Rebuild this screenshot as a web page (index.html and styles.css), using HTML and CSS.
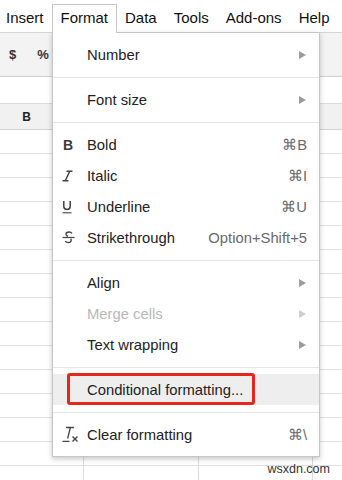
FILE: index.html
```html
<!DOCTYPE html>
<html lang="en">
<head>
  <meta charset="UTF-8" />
  <title>Format menu</title>
  <link rel="stylesheet" href="styles.css">
</head>
<body>
<div class="app">

  <!-- Menu bar -->
  <div class="menubar">
    <span class="menubar-item">Insert</span>
    <span class="menubar-item is-open">Format</span>
    <span class="menubar-item">Data</span>
    <span class="menubar-item">Tools</span>
    <span class="menubar-item">Add-ons</span>
    <span class="menubar-item">Help</span>
  </div>

  <!-- Toolbar + sheet behind the menu -->
  <div class="toolbar">
    <span class="tool">$</span>
    <span class="tool">%</span>
  </div>
  <div class="formula-bar"></div>
  <div class="col-headers">
    <span class="col-head">B</span>
  </div>
  <div class="sheet"></div>

  <!-- Format dropdown -->
  <div class="dropdown">
    <div class="item">
      <span class="item-icon"></span>
      <span class="item-label">Number</span>
      <span class="arrow"></span>
    </div>
    <div class="sep"></div>
    <div class="item">
      <span class="item-icon"></span>
      <span class="item-label">Font size</span>
      <span class="arrow"></span>
    </div>
    <div class="sep"></div>
    <div class="item">
      <span class="item-icon"><span class="icon-bold">B</span></span>
      <span class="item-label">Bold</span>
      <span class="item-key">⌘B</span>
    </div>
    <div class="item">
      <span class="item-icon">
        <svg width="11" height="12" viewBox="0 0 11 12">
          <path d="M4.5 1.2h6M0.5 10.8h6M7.8 1.2L3.2 10.8" stroke="#444" stroke-width="1.5" fill="none"/>
        </svg>
      </span>
      <span class="item-label">Italic</span>
      <span class="item-key">⌘I</span>
    </div>
    <div class="item">
      <span class="item-icon">
        <svg width="10" height="14" viewBox="0 0 10 14">
          <path d="M1.8 1v5.2a3.2 3.2 0 0 0 6.4 0V1" stroke="#444" stroke-width="1.5" fill="none"/>
          <path d="M0.5 12.8h9" stroke="#444" stroke-width="1.1"/>
        </svg>
      </span>
      <span class="item-label">Underline</span>
      <span class="item-key">⌘U</span>
    </div>
    <div class="item">
      <span class="item-icon">
        <svg width="13" height="13" viewBox="0 0 13 13">
          <path d="M10 2.4C9.4 1.5 8.3 1 7 1 5.3 1 4 1.9 4 3.2c0 1.1 0.8 1.7 2 2.1" stroke="#444" stroke-width="1.3" fill="none"/>
          <path d="M0.5 6.5h12" stroke="#444" stroke-width="1.2"/>
          <path d="M8.6 7.8c0.4 0.4 0.6 0.8 0.6 1.4 0 1.4-1.3 2.4-3 2.4-1.3 0-2.4-0.5-3-1.4" stroke="#444" stroke-width="1.3" fill="none"/>
        </svg>
      </span>
      <span class="item-label">Strikethrough</span>
      <span class="item-key">Option+Shift+5</span>
    </div>
    <div class="sep"></div>
    <div class="item">
      <span class="item-icon"></span>
      <span class="item-label">Align</span>
      <span class="arrow"></span>
    </div>
    <div class="item is-disabled">
      <span class="item-icon"></span>
      <span class="item-label">Merge cells</span>
      <span class="arrow"></span>
    </div>
    <div class="item">
      <span class="item-icon"></span>
      <span class="item-label">Text wrapping</span>
      <span class="arrow"></span>
    </div>
    <div class="sep"></div>
    <div class="item is-hover">
      <span class="item-icon"></span>
      <span class="item-label">Conditional formatting...</span>
      <span class="callout"></span>
    </div>
    <div class="sep"></div>
    <div class="item">
      <span class="item-icon">
        <svg width="18" height="17" viewBox="0 0 18 17">
          <path d="M4 1.5h8M8.4 1.5L5.6 12.5M0.5 15.3h7" stroke="#444" stroke-width="1.3" fill="none"/>
          <path d="M10.5 10.5l5 5M15.5 10.5l-5 5" stroke="#444" stroke-width="1.4"/>
        </svg>
      </span>
      <span class="item-label">Clear formatting</span>
      <span class="item-key">⌘\</span>
    </div>
  </div>

  <span class="watermark">wsxdn.com</span>
</div>
</body>
</html>
```

FILE: styles.css
```css
/* Basic page styling */
* {
  box-sizing: border-box;
  margin: 0;
  padding: 0;
}
body {
  font-family: "Liberation Sans", Arial, sans-serif;
  background: #fff;
  color: #222;
}
.app {
  position: relative;
  width: 342px;
  height: 480px;
  overflow: hidden;
  display: flex;
  flex-direction: column;
}

/* ============================================================
   Menu bar
   ============================================================ */
.menubar {
  display: flex;
  align-items: flex-end;
  height: 33px;
  padding-top: 4px;
  border-bottom: 1px solid #d6d6d6;
  white-space: nowrap;
}
.menubar-item {
  height: 28px;
  padding: 0 7.5px;
  border: 1px solid transparent;
  border-bottom: none;
  font-size: 15px;
  line-height: 25px;
  color: #111;
}
.menubar-item:first-child {
  padding-left: 5px;
}
.menubar-item.is-open {
  position: relative;
  z-index: 3;
  height: 29px;
  margin-bottom: -1px;
  background: #fff;
  border-color: #c8c8c8;
}

/* ============================================================
   Toolbar and sheet
   ============================================================ */
.toolbar {
  display: flex;
  align-items: center;
  gap: 21px;
  height: 44px;
  padding-left: 9px;
  background: #f3f3f3;
  border-bottom: 1px solid #cfcfcf;
}
.tool {
  font-size: 13px;
  font-weight: bold;
  color: #333;
}
.formula-bar {
  height: 27px;
  border-bottom: 1px solid #d9d9d9;
}
.col-headers {
  display: flex;
  align-items: center;
  height: 26px;
  background: #f1f1f1;
  border-bottom: 1px solid #d4d4d4;
}
.col-head {
  width: 53px;
  text-align: center;
  font-size: 12px;
  font-weight: bold;
  color: #222;
}
.sheet {
  flex: 1;
  background:
    linear-gradient(to right, transparent 83px, #dadada 83px, #dadada 84px, transparent 84px),
    linear-gradient(to right, transparent 198px, #dadada 198px, #dadada 199px, transparent 199px),
    linear-gradient(to right, transparent 312px, #dadada 312px, #dadada 313px, transparent 313px),
    repeating-linear-gradient(to bottom, transparent 0, transparent 23px, #e0e0e0 23px, #e0e0e0 24px);
}

/* ============================================================
   Dropdown menu
   ============================================================ */
.dropdown {
  position: absolute;
  top: 32px;
  left: 52px;
  width: 268px;
  padding: 6px 0;
  background: #fff;
  border: 1px solid #c6c6c6;
  box-shadow: 0 2px 5px rgba(0, 0, 0, 0.22);
  z-index: 2;
}
.item {
  position: relative;
  display: flex;
  align-items: center;
  height: 31px;
  padding-right: 12px;
  font-size: 14.8px;
  color: #222;
  white-space: nowrap;
}
.item-icon {
  display: flex;
  align-items: center;
  width: 34px;
  padding-left: 9px;
}
.item-label {
  flex: 1;
}
.item-key {
  color: #6a6a6a;
}
.icon-bold {
  font-size: 14px;
  font-weight: bold;
  color: #3a3a3a;
  padding-left: 1px;
}
.arrow {
  width: 0;
  height: 0;
  margin-right: 1px;
  border-left: 7px solid #9c9c9c;
  border-top: 4px solid transparent;
  border-bottom: 4px solid transparent;
}
.item.is-disabled {
  color: #b8b8b8;
}
.item.is-disabled .arrow {
  border-left-color: #cfcfcf;
}
.item.is-hover {
  background: #eeeeee;
}
.sep {
  height: 1px;
  margin: 7px 0 6px;
  background: #e5e5e5;
}

/* red annotation box */
.callout {
  position: absolute;
  left: 14px;
  top: -1px;
  width: 188px;
  height: 32px;
  border: 3px solid #e4291c;
  border-radius: 3px;
}

.watermark {
  position: absolute;
  right: 12px;
  top: 462px;
  font-size: 12.5px;
  color: #333;
}
```
